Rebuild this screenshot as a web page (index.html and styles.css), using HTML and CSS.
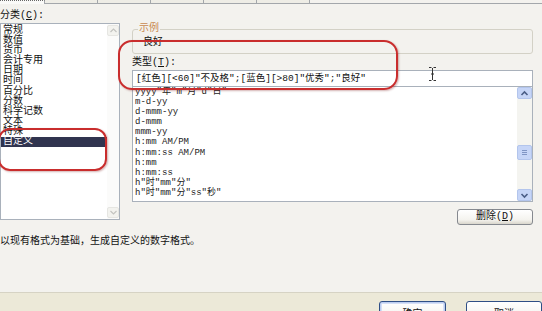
FILE: index.html
```html
<!DOCTYPE html>
<html lang="zh-CN">
<head>
  <meta charset="UTF-8" />
  <title>设置单元格格式 - 数字</title>
  <link rel="stylesheet" href="styles.css">
</head>
<body>

<div class="tabs">
  <div class="tab active"></div>
  <div class="tab"></div>
  <div class="tab"></div>
  <div class="tab"></div>
  <div class="tab"></div>
  <div class="tab"></div>
  <div class="tab-rest"></div>
</div>

<div class="page">
  <div class="cols">
    <div class="left">
      <div class="label">分类(<u>C</u>):</div>
      <div class="cat-box">
        <ul class="cat-list">
          <li>常规</li>
          <li>数值</li>
          <li>货币</li>
          <li>会计专用</li>
          <li>日期</li>
          <li>时间</li>
          <li>百分比</li>
          <li>分数</li>
          <li>科学记数</li>
          <li>文本</li>
          <li>特殊</li>
          <li class="sel">自定义</li>
        </ul>
        <div class="vscroll off">
          <span class="sbtn"><svg width="9" height="9" viewBox="0 0 9 9"><polyline points="1.5,6 4.5,3 7.5,6" /></svg></span>
          <span class="track"></span>
          <span class="sbtn"><svg width="9" height="9" viewBox="0 0 9 9"><polyline points="1.5,3 4.5,6 7.5,3" /></svg></span>
        </div>
      </div>
    </div>

    <div class="right">
      <div class="group">
        <span class="legend">示例</span>
        <div class="sample">良好</div>
      </div>
      <div class="label type-label">类型(<u>T</u>):</div>
      <div class="type-input">[红色][&lt;60]"不及格";[蓝色][&gt;80]"优秀";"良好"</div>
      <div class="fmt-box">
        <ul class="fmt-list">
          <li>yyyy"年"m"月"d"日"</li>
          <li>m-d-yy</li>
          <li>d-mmm-yy</li>
          <li>d-mmm</li>
          <li>mmm-yy</li>
          <li>h:mm AM/PM</li>
          <li>h:mm:ss AM/PM</li>
          <li>h:mm</li>
          <li>h:mm:ss</li>
          <li>h"时"mm"分"</li>
          <li>h"时"mm"分"ss"秒"</li>
        </ul>
        <div class="vscroll">
          <span class="sbtn"><svg width="9" height="9" viewBox="0 0 9 9"><polyline points="1.5,6 4.5,3 7.5,6" /></svg></span>
          <span class="track">
            <span class="thumb"><svg width="7" height="5" viewBox="0 0 7 5"><path d="M1 0.5h5M1 2.5h5M1 4.5h5" /></svg></span>
          </span>
          <span class="sbtn"><svg width="9" height="9" viewBox="0 0 9 9"><polyline points="1.5,3 4.5,6 7.5,3" /></svg></span>
        </div>
      </div>
      <div class="btn-row">
        <button class="btn btn-del">删除(<u>D</u>)</button>
      </div>
    </div>
  </div>

  <p class="desc">以现有格式为基础，生成自定义的数字格式。</p>
</div>

<div class="footer">
  <button class="btn btn-ok">确定</button>
  <button class="btn btn-cancel">取消</button>
</div>

<!-- red annotation marks drawn over the dialog -->
<div class="mark mark-cat"></div>
<div class="mark mark-type"></div>
<svg class="ibeam" width="9" height="14" viewBox="0 0 9 14"><path d="M1 0.5h2.5M5.5 0.5h2.5M4.5 1v12M1 13.5h2.5M5.5 13.5h2.5M3 7h3" /></svg>

</body>
</html>
```

FILE: styles.css
```css
:root {
  --page: #f3f2ee;
  --dlg: #ece9d8;
  --field-border: #a9b1bb;
  --red: #c92d2d;
}

* {
  box-sizing: border-box;
}

body {
  margin: 0;
  width: 542px;
  height: 311px;
  overflow: hidden;
  position: relative;
  background: var(--page);
  font-family: "Liberation Mono", "Noto Sans CJK SC", monospace;
  font-size: 10px;
  color: #111;
  display: flex;
  flex-direction: column;
}

/* tab strip, mostly cut off at the top */
.tabs {
  display: flex;
  height: 4px;
  flex: none;
}

.tab {
  width: 53px;
  border-right: 1px solid #a3a7ab;
  border-bottom: 1px solid #a3a7ab;
  background: #eeede6;
}

.tab.active {
  width: 45px;
  background: #fafaf8;
  border-bottom: none;
  border-top: 1px dotted #666;
}

.tab-rest {
  flex: 1;
  border-bottom: 1px solid #a3a7ab;
}

.page {
  height: 288px;
  flex: none;
}

.cols {
  display: grid;
  grid-template-columns: 120px 401px;
  column-gap: 12px;
}

.label {
  line-height: 14px;
  height: 14px;
  white-space: nowrap;
}

.left .label {
  margin-top: 5px;
}

/* category list */
.cat-box {
  height: 197px;
  display: flex;
  background: #fff;
  border: 1px solid var(--field-border);
  overflow: hidden;
}

.cat-list {
  list-style: none;
  margin: 0;
  padding: 2px 0 0 0;
  flex: 1;
}

.cat-list li {
  height: 10.1px;
  line-height: 10.1px;
  padding-left: 2px;
  white-space: nowrap;
}

.cat-list li.sel {
  background: #30344f;
  color: #fff;
}

/* scrollbars */
.vscroll {
  width: 15px;
  display: flex;
  flex-direction: column;
  background: #f4f4f0;
}

.vscroll.off {
  width: 12px;
  background: #fbfbfa;
  padding: 1px 0;
}

.sbtn {
  height: 12px;
  display: flex;
  align-items: center;
  justify-content: center;
  background: #c6d5f7;
  border: 1px solid #b3c5ec;
  border-radius: 2px;
}

.sbtn polyline {
  fill: none;
  stroke: #4b5e86;
  stroke-width: 1.6;
}

.vscroll.off .sbtn {
  height: 11px;
  background: #f3f3ef;
  border-color: #e6e6e2;
}

.vscroll.off .sbtn polyline {
  stroke: #c4c4c0;
  stroke-width: 1.2;
}

.track {
  flex: 1;
  display: flex;
  flex-direction: column;
  padding-top: 46px;
}

.thumb {
  height: 15px;
  display: flex;
  align-items: center;
  justify-content: center;
  background: #c6d5f7;
  border: 1px solid #b3c5ec;
  border-radius: 2px;
}

.thumb path {
  stroke: #8095c4;
  stroke-width: 1;
}

/* right column */
.group {
  margin-top: 25px;
  height: 25px;
  border: 1px solid #d3d1c6;
  border-radius: 3px;
  padding-left: 10px;
}

.legend {
  display: block;
  width: max-content;
  margin: -7px 0 0 -5px;
  padding: 0 1px;
  background: var(--page);
  color: #c98a50;
  line-height: 12px;
}

.sample {
  margin-top: 2px;
  line-height: 12px;
}

.type-label {
  margin-top: 2px;
}

.type-input {
  height: 17px;
  border: 1px solid var(--field-border);
  background: #fff;
  padding-left: 3px;
  line-height: 15px;
  font-size: 9.5px;
  white-space: nowrap;
  overflow: hidden;
}

.fmt-box {
  height: 115px;
  display: flex;
  background: #fff;
  border: 1px solid var(--field-border);
  border-top: none;
  overflow: hidden;
}

.fmt-list {
  list-style: none;
  margin: 0;
  padding: 0 0 0 2px;
  flex: 1;
  font-size: 9px;
  color: #222;
}

.fmt-list li {
  height: 10.1px;
  line-height: 10.1px;
  white-space: nowrap;
}

.btn-row {
  display: flex;
  justify-content: flex-end;
  margin-top: 7px;
}

.btn {
  font-family: inherit;
  font-size: 10px;
  color: #111;
  padding: 0;
  border: 1px solid #85898f;
  border-radius: 3px;
  background: linear-gradient(#ffffff, #f4f3ee 70%, #d9d6cc);
  cursor: pointer;
}

.btn-del {
  width: 76px;
  height: 16px;
  line-height: 14px;
}

.desc {
  margin: 10px 0 0;
  line-height: 13px;
}

/* bottom strip with OK / Cancel */
.footer {
  flex: 1;
  display: flex;
  gap: 20px;
  padding: 8px 0 0 379px;
  background: var(--dlg);
  border-top: 1px solid #d6d3c4;
}

.btn-ok,
.btn-cancel {
  flex: none;
  height: 23px;
  width: 67px;
  border-color: #2f4f86;
}

.btn-ok {
  box-shadow: inset 0 0 0 1px #bccdf0, inset 0 0 0 2px #d6e0f6;
}

.btn-cancel {
  width: 76px;
}

/* annotations */
.mark {
  position: absolute;
  border: 2px solid var(--red);
  border-radius: 14px;
  box-shadow: 1px 1px 2px rgba(110, 0, 0, 0.3);
}

.mark-cat {
  left: -2px;
  top: 128px;
  width: 109px;
  height: 43px;
  border-radius: 12px;
}

.mark-type {
  left: 118px;
  top: 40px;
  width: 280px;
  height: 50px;
}

.ibeam {
  position: absolute;
  left: 428px;
  top: 67px;
}

.ibeam path {
  stroke: #333;
  stroke-width: 1;
  fill: none;
}
```
